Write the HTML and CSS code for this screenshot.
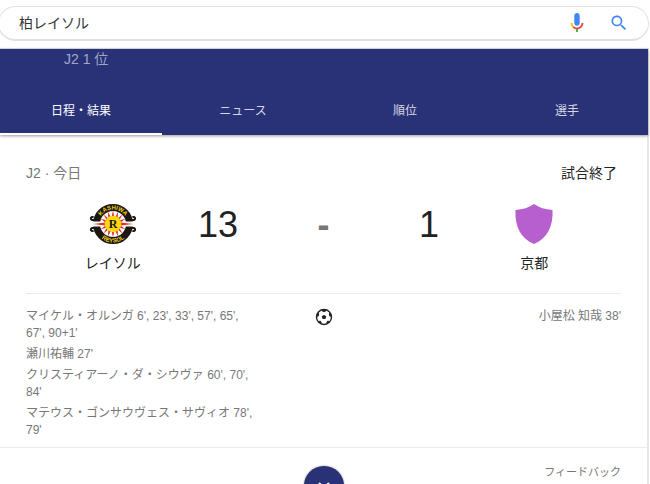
FILE: index.html
```html
<!DOCTYPE html>
<html lang="ja">
<head>
<meta charset="UTF-8">
<meta name="viewport" content="width=device-width, initial-scale=1.0">
<title>柏レイソル</title>
<link rel="stylesheet" href="styles.css">
</head>
<body>

<form class="search-bar" role="search">
  <input type="text" class="search-input" value="柏レイソル" aria-label="検索">
  <button type="button" class="icon-button" aria-label="音声検索">
    <svg width="20" height="20" viewBox="1 1 22 22">
      <path fill="#4285f4" d="M12 15c1.700 0 3-1.300 3-3V4c0-1.700-1.300-3-3-3S9 2.300 9 4v8c0 1.700 1.300 3 3 3z"/>
      <path fill="#34a853" d="M11 18.500h2V22h-2z"/>
      <path fill="#fbbc05" d="M7 12H5c0 2 .8 3.700 2.100 5l1.400-1.400C7.600 14.700 7 13.400 7 12z"/>
      <path fill="#ea4335" d="M12 17c-1.400 0-2.600-.5-3.500-1.400L7.100 17c1.200 1.200 3 2 4.900 2 3.900 0 7-3.100 7-7h-2c0 2.800-2.200 5-5 5z"/>
    </svg>
  </button>
  <button type="submit" class="icon-button" aria-label="検索する">
    <svg width="20" height="20" viewBox="0 0 24 24">
      <path fill="#4285f4" d="M15.500 14h-.8l-.3-.3A6.500 6.500 0 1 0 13.700 14.400l.3.3v.8l5 5 1.500-1.500zM9.500 14a4.500 4.500 0 1 1 0-9 4.500 4.500 0 0 1 0 9z"/>
    </svg>
  </button>
</form>

<main class="card">
  <header class="team-header">
    <div class="rank">J2 1 位</div>
    <nav class="tabs">
      <a href="#matches" class="tab active">日程・結果</a>
      <a href="#news" class="tab">ニュース</a>
      <a href="#standings" class="tab">順位</a>
      <a href="#players" class="tab">選手</a>
    </nav>
  </header>

  <section class="match" id="matches">
    <div class="match-info">
      <span class="league">J2 · 今日</span>
      <span>試合終了</span>
    </div>

    <div class="scoreboard">
      <div class="team">
        <svg width="48" height="40" viewBox="0 0 48 40">
          <defs>
            <path id="arcTop" d="M9.500 20a14.500 14.500 0 0 1 29 0"/>
            <path id="arcBottom" d="M5.500 20a18.500 18.500 0 0 0 37 0"/>
          </defs>
          <circle cx="24" cy="20" r="16.500" fill="#fff" stroke="#1c1712" stroke-width="7"/>
          <path fill="#fff" d="M0 17.500h48v5H0z"/>
          <g fill="none" stroke="#1c1712" stroke-width="2">
            <path d="M7 16H3.500a1.500 1.500 0 1 1 1-2.500M41 16h3.500a1.500 1.500 0 1 0-1-2.500"/>
            <path d="M7 24H3.500a1.500 1.500 0 1 0 1 2.500M41 24h3.500a1.500 1.500 0 1 1-1 2.500"/>
          </g>
          <path fill="#de3029" d="M4 20l12-1.500v3zM44 20l-12-1.500v3zM24 6.500l1.300 6h-2.600zM24 33.500l1.300-6h-2.600zM18.800 7.500l3 5.400-2.400 1zM29.200 7.500l-3 5.400 2.400 1zM18.800 32.500l3-5.400-2.400-1zM29.200 32.500l-3-5.400 2.400-1zM14.500 10.500l5 4-1.800 1.800zM33.500 10.500l-5 4 1.800 1.800zM14.500 29.500l5-4-1.800-1.800zM33.500 29.500l-5-4 1.800-1.800zM11.500 14.800l6 1.500-1 2.300zM36.500 14.800l-6 1.500 1 2.300zM11.500 25.200l6-1.500-1-2.300zM36.500 25.200l-6-1.500 1-2.300z"/>
          <circle cx="24" cy="20" r="8.300" fill="#f8d90f"/>
          <text class="crest-letter" x="24" y="24" text-anchor="middle">R</text>
          <text class="crest-text"><textPath href="#arcTop" startOffset="50%" text-anchor="middle">KASHIWA</textPath></text>
          <text class="crest-text"><textPath href="#arcBottom" startOffset="50%" text-anchor="middle">REYSOL</textPath></text>
        </svg>
        <span>レイソル</span>
      </div>
      <div class="score">13</div>
      <div class="score dash">-</div>
      <div class="score">1</div>
      <div class="team">
        <svg width="48" height="40" viewBox="0 0 48 40">
          <path fill="#b75fce" d="M24 0c5 3.500 11 5.500 18.500 6C43.500 22 37 35 24 40 11 35 4.500 22 5.500 6 13 5.500 19 3.500 24 0z"/>
        </svg>
        <span>京都</span>
      </div>
    </div>

    <div class="goals">
      <ul class="scorers">
        <li>マイケル・オルンガ 6', 23', 33', 57', 65', 67', 90+1'</li>
        <li>瀬川祐輔 27'</li>
        <li>クリスティアーノ・ダ・シウヴァ 60', 70', 84'</li>
        <li>マテウス・ゴンサウヴェス・サヴィオ 78', 79'</li>
      </ul>
      <svg class="ball" width="18" height="18" viewBox="0 0 18 18">
        <circle cx="9" cy="9" r="7.500" fill="#fff" stroke="#222" stroke-width="1.400"/>
        <path fill="#222" d="M9 6.700l2.300 1.700-.9 2.700H7.600l-.9-2.700zM6.500 1.500h5L11 3.300l-2 1-2-1zM1.200 7.500L3 4.500l1.200 1.200-.4 2.200-2 1zM16.800 7.500L15 4.500l-1.200 1.200.4 2.200 2 1zM3.200 13l2.300-.3 1.200 1.800-.5 2zM14.800 13l-2.300-.3-1.200 1.800.5 2z"/>
      </svg>
      <ul class="scorers away">
        <li>小屋松 知哉 38'</li>
      </ul>
    </div>
  </section>

  <footer class="card-footer">
    <button type="button" class="expand" aria-label="もっと見る">
      <svg width="16" height="10" viewBox="0 0 16 10">
        <path fill="none" stroke="#fff" stroke-width="2" d="M3 2l5 5 5-5"/>
      </svg>
    </button>
    <a href="#feedback" class="feedback">フィードバック</a>
  </footer>
</main>

</body>
</html>
```
FILE: styles.css
```css
* { box-sizing: border-box; }
body {
  margin: 0;
  height: 100vh;
  overflow: hidden;
  background: #fff;
  color: #222;
  font-family: "Liberation Sans", "Noto Sans CJK JP", sans-serif;
  font-size: 14px;
}
a { color: inherit; text-decoration: none; }
button { padding: 0; border: none; background: none; cursor: pointer; }
ul { margin: 0; padding: 0; list-style: none; }
svg { display: block; }

/* search box */
.search-bar {
  display: flex;
  align-items: center;
  gap: 22px;
  height: 35px;
  margin: 6px 1px 7px -2px;
  padding: 0 19px 0 20px;
  border: 1px solid #dfe1e5;
  border-bottom-width: 2px;
  border-radius: 18px;
}
.search-input {
  flex: 1;
  min-width: 0;
  padding: 0 0 2px;
  border: none;
  outline: none;
  background: none;
  color: #333;
  font: inherit;
}
.icon-button { display: flex; }

/* card */
.card {
  margin-right: 1px;
  border-top: 1px solid #dfe1e5;
  border-right: 2px solid #e6e6ec;
}
.team-header {
  margin-right: -1px;
  background: #293276;
  color: #fff;
  box-shadow: 0 1px 3px rgba(0,0,0,0.4);
}
.rank {
  height: 38px;
  padding-left: 64px;
  line-height: 21px;
  color: #a3a7c7;
}
.tabs { display: grid; grid-template-columns: repeat(4, 1fr); }
.tab {
  height: 48px;
  border-bottom: 2px solid transparent;
  color: #d4d6e4;
  font-size: 12px;
  line-height: 48px;
  text-align: center;
}
.tab.active { border-bottom-color: #fff; color: #fff; }

/* match */
.match { padding: 26px 26px 8px; border-bottom: 1px solid #ebebeb; }
.match-info {
  display: flex;
  justify-content: space-between;
  padding-right: 4px;
  line-height: 24px;
}
.league { color: #777; }
.scoreboard {
  display: grid;
  grid-template-columns: repeat(5, 1fr);
  padding: 19px 34px 18px;
}
.team {
  display: flex;
  flex-direction: column;
  align-items: center;
  gap: 7px;
  line-height: 24px;
}
.score { font-size: 36px; line-height: 42px; text-align: center; }
.dash { color: #777; font-weight: bold; }
.crest-letter { font: bold 12px "Liberation Serif", serif; fill: #1c1712; }
.crest-text { font-size: 6px; font-weight: bold; fill: #e8d21d; }

/* goals */
.goals {
  display: grid;
  grid-template-columns: 1fr 136px 1fr;
  padding-top: 14px;
  border-top: 1px solid #ebebeb;
  color: #777;
  font-size: 12px;
  line-height: 17px;
}
.scorers { display: flex; flex-direction: column; gap: 4px; }
.away { text-align: right; }
.ball { justify-self: center; }

/* footer */
.card-footer {
  display: grid;
  grid-template-columns: 1fr 40px 1fr;
  padding: 18px 26px;
}
.expand {
  grid-column: 2;
  display: flex;
  align-items: center;
  justify-content: center;
  height: 40px;
  border-radius: 50%;
  background: #293276;
  box-shadow: 0 0 2px rgba(0,0,0,0.5);
}
.feedback {
  justify-self: end;
  color: #777;
  font-size: 11px;
  line-height: 12px;
}
```
